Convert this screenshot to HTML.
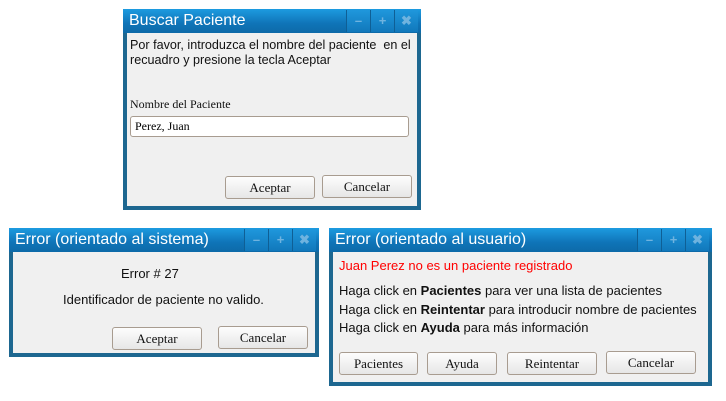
<!DOCTYPE html>
<html><head><style>
body{margin:0;width:726px;height:401px;background:#fff;position:relative;overflow:hidden;font-family:"Liberation Sans",Arial,sans-serif}
.win{position:absolute;background:#1d6790;}
.tb{position:absolute;left:0;right:0;top:0;height:24px;background:linear-gradient(#1d9be0,#0f74b8 60%,#0d6aa8);color:#fff;font-size:16px;line-height:24px;padding-left:6px}
.body{position:absolute;left:4px;right:4px;top:24px;bottom:4px;background:#f0f0f0}
.btns{position:absolute;right:3px;top:1px;height:22px;display:flex}
.btns div{width:23px;height:22px;background:linear-gradient(#1f97dc,#1178bb);border-left:1px solid #0f5f95;color:#6fb3df;font-weight:bold;font-size:13px;text-align:center;line-height:22px}
.t{position:absolute;font-size:13px;color:#111;white-space:nowrap}
.b{position:absolute;height:21px;border:1px solid #a89c90;border-radius:3px;background:linear-gradient(#fdfdfd,#e6e6e6);font-family:"Liberation Serif",serif;font-size:13px;text-align:center;line-height:21px;color:#111}
</style></head><body>

<div class="win" style="left:123px;top:9px;width:298px;height:201px">
<div class="tb">Buscar Paciente</div>
<div class="btns"><div>–</div><div>+</div><div>✖</div></div>
<div class="body"></div>
</div>
<div class="t" style="left:130px;top:38px;line-height:15px;font-size:12.6px">Por favor, introduzca el nombre del paciente&nbsp; en el<br>recuadro y presione la tecla Aceptar</div>
<div class="t" style="left:130px;top:97px;font-family:'Liberation Serif',serif;font-size:12px">Nombre del Paciente</div>
<div style="position:absolute;left:130px;top:116px;background:#fff;border:1px solid #a89c90;border-radius:3px;font-family:'Liberation Serif',serif;font-size:12px;line-height:19px;padding-left:4px;box-sizing:border-box;width:279px;height:21px">Perez, Juan</div>
<div class="b" style="left:225px;top:176px;width:88px">Aceptar</div>
<div class="b" style="left:322px;top:175px;width:88px">Cancelar</div>

<div class="win" style="left:9px;top:228px;width:310px;height:129px">
<div class="tb">Error (orientado al sistema)</div>
<div class="btns"><div>–</div><div>+</div><div>✖</div></div>
<div class="body"></div>
</div>
<div class="t" style="left:121px;top:266px">Error # 27</div>
<div class="t" style="left:63px;top:292px">Identificador de paciente no valido.</div>
<div class="b" style="left:112px;top:327px;width:88px">Aceptar</div>
<div class="b" style="left:218px;top:326px;width:88px">Cancelar</div>

<div class="win" style="left:329px;top:228px;width:383px;height:158px">
<div class="tb">Error (orientado al usuario)</div>
<div class="btns"><div>–</div><div>+</div><div>✖</div></div>
<div class="body"></div>
</div>
<div class="t" style="left:339px;top:258px;color:#f00">Juan Perez no es un paciente registrado</div>
<div class="t" style="left:339px;top:282px;line-height:18.5px">Haga click en <b>Pacientes</b> para ver una lista de pacientes<br>Haga click en <b>Reintentar</b> para introducir nombre de pacientes<br>Haga click en <b>Ayuda</b> para más información</div>
<div class="b" style="left:339px;top:352px;width:77px">Pacientes</div>
<div class="b" style="left:427px;top:352px;width:68px">Ayuda</div>
<div class="b" style="left:507px;top:352px;width:88px">Reintentar</div>
<div class="b" style="left:606px;top:351px;width:88px">Cancelar</div>
</body></html>
